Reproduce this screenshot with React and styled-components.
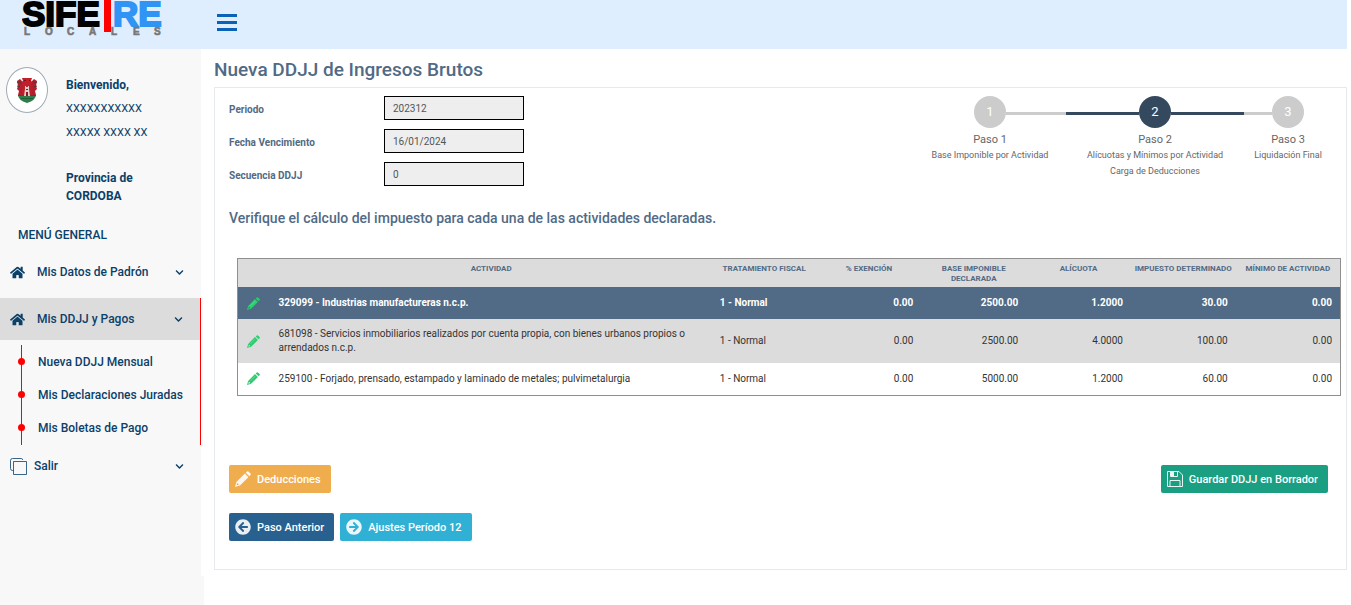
import React from "react";
import styled, { createGlobalStyle } from "styled-components";
import { FaHome, FaChevronDown, FaArrowCircleLeft, FaArrowCircleRight } from "react-icons/fa";

const Global = createGlobalStyle`
  *, *::before, *::after { box-sizing: border-box; }
  body { margin: 0; background: #fff; font-family: Roboto, "Liberation Sans", sans-serif; color: #516a85; font-size: 12px; }
  h1, h2, p, ul { margin: 0; padding: 0; }
  ul { list-style: none; }
  a { color: inherit; text-decoration: none; }
  button { font-family: inherit; cursor: pointer; }
`;

const Page = styled.div`
  padding-right: 4px;
  min-height: 100vh;
  display: flex;
  flex-direction: column;
`;
const Header = styled.header`
  height: 49px;
  background: #dfeeff;
  display: flex;
  align-items: flex-start;
`;
const LogoBox = styled.a`
  display: block;
  width: 217px;
  height: 49px;
  padding-left: 22px;
`;
const MenuButton = styled.button`
  border: 0;
  background: none;
  padding: 0;
  margin-top: 14px;
  width: 20px;
  height: 17px;
  display: flex;
  flex-direction: column;
  justify-content: space-between;
`;
const Bar = styled.span`
  display: block;
  width: 20px;
  height: 3px;
  background: #0b61b8;
`;
const Body = styled.div`
  flex: 1;
  display: flex;
`;
const Sidebar = styled.aside`
  width: 204px;
  flex: none;
  background: #f8f8f8;
  color: #0b4069;
  font-weight: 500;
`;
const SideInner = styled.div`
  min-height: 527px;
  border-right: 3px solid #fff;
`;
const Profile = styled.div`
  display: flex;
  gap: 18px;
  padding: 18px 0 0 6px;
`;
const Crest = styled.div`
  width: 42px;
  height: 46px;
  border: 1px solid #9fa9b5;
  border-radius: 50%;
  background: #fff;
  display: flex;
  align-items: center;
  justify-content: center;
`;
const Who = styled.div`
  padding-top: 6px;
  font-size: 12px;
  line-height: 24px;
`;
const Strong = styled.p`
  font-weight: 700;
`;
const Plain = styled.p`
  font-size: 11px;
  font-weight: 400;
`;
const Province = styled.p`
  margin-top: 24px;
  font-weight: 700;
  line-height: 18px;
  width: 90px;
`;
const MenuTitle = styled.h2`
  padding: 20px 0 6px 18px;
  font-size: 12px;
  line-height: 20px;
  font-weight: 500;
`;
const MenuItem = styled.a`
  display: flex;
  align-items: center;
  height: 42px;
  margin-bottom: ${(p) => p.$gap || 0}px;
  padding: 0 17px 0 10px;
  gap: ${(p) => (p.$wide ? 7 : 12)}px;
  background: ${(p) => (p.$active ? "#dcdcdc" : "none")};
  font-size: 12px;
  span { flex: 1; }
`;
const Group = styled.li`
  border-right: ${(p) => (p.$open ? "1px solid #f00" : "0")};
`;
const SubMenu = styled.ul`
  margin-left: 21px;
  border-left: 1px solid #f00;
  margin-top: 5px;
  padding-bottom: 1px;
`;
const SubItem = styled.li`
  display: flex;
  align-items: center;
  height: 33px;
  margin-left: -4px;
  gap: 13px;
  line-height: 18px;
  &::before {
    content: "";
    width: 7px;
    height: 7px;
    border-radius: 50%;
    background: #f00;
  }
`;
const Main = styled.main`
  flex: 1;
  min-width: 0;
  padding: 9px 0 34px 10px;
`;
const Title = styled.h1`
  font-size: 19px;
  line-height: 24px;
  font-weight: 500;
`;
const Panel = styled.section`
  margin-top: 5px;
  border: 1px solid #e6e9ed;
  padding: 8px 5px 28px 14px;
`;
const Top = styled.div`
  display: flex;
  justify-content: space-between;
  align-items: flex-start;
`;
const Fields = styled.div`
  display: grid;
  gap: 9px;
`;
const Field = styled.div`
  display: grid;
  grid-template-columns: 155px 140px;
  align-items: center;
`;
const Label = styled.label`
  padding-top: 3px;
  font-size: 10px;
  font-weight: 700;
`;
const Input = styled.input`
  height: 24px;
  width: 140px;
  border: 1px solid #000;
  background: #eee;
  padding: 0 8px;
  font: 400 10px Roboto, sans-serif;
  color: #555;
  border-radius: 0;
`;
const Steps = styled.ol`
  margin: 0 9px 0 0;
  padding: 0;
  list-style: none;
  display: flex;
`;
const Step = styled.li`
  width: ${(p) => p.$w}px;
  display: flex;
  flex-direction: column;
  align-items: center;
  text-align: center;
  color: #666;
`;
const Track = styled.div`
  align-self: stretch;
  display: flex;
  align-items: center;
  margin-bottom: 4px;
  &::before, &::after {
    content: "";
    flex: 1;
    height: 3px;
    margin-top: 3px;
    background: ${(p) => (p.$on ? "#34495e" : "#ccc")};
  }
  &::before { visibility: ${(p) => (p.$first ? "hidden" : "visible")}; }
  &::after { visibility: ${(p) => (p.$last ? "hidden" : "visible")}; }
`;
const Circle = styled.span`
  width: 32px;
  height: 32px;
  border-radius: 50%;
  background: ${(p) => (p.$on ? "#34495e" : "#ccc")};
  color: #fff;
  font-size: 13px;
  line-height: 32px;
`;
const StepName = styled.span`
  font-size: 11px;
  line-height: 15px;
`;
const StepText = styled.small`
  font-size: 9px;
  line-height: 16px;
`;
const Lead = styled.h2`
  margin-top: 22px;
  font-size: 14px;
  line-height: 20px;
  font-weight: 500;
`;
const Table = styled.table`
  width: calc(100% - 8px);
  margin: 30px 0 0 8px;
  border-collapse: collapse;
  table-layout: fixed;
  border: 1px solid #8f8f8f;
  color: #333;
  font-size: 10px;
`;
const Th = styled.th`
  height: 28px;
  padding: 5px 2px 3px;
  background: #dcdcdc;
  color: #516a85;
  font-size: 8px;
  line-height: 10px;
  font-weight: 700;
  vertical-align: top;
`;
const Tr = styled.tr`
  height: ${(p) => (p.$tall ? 44 : 32)}px;
  background: ${(p) => (p.$selected ? "#516a85" : p.$shade ? "#dcdcdc" : "#fff")};
  color: ${(p) => (p.$selected ? "#fff" : "#333")};
  font-weight: ${(p) => (p.$selected ? 700 : 400)};
`;
const Td = styled.td`
  padding: 0 8px 0 ${(p) => (p.$num ? 4 : 8)}px;
  line-height: 14px;
  text-align: ${(p) => (p.$num ? "right" : "left")};
`;
const EditButton = styled.button`
  border: 0;
  background: none;
  padding: 0 0 0 1px;
  color: #2ecc71;
  display: flex;
  svg { width: 13px; height: 13px; }
`;
const Actions = styled.div`
  display: flex;
  gap: 6px;
  margin-top: ${(p) => p.$top}px;
  justify-content: ${(p) => (p.$spread ? "space-between" : "flex-start")};
  padding-right: 13px;
`;
const Button = styled.button`
  display: flex;
  align-items: center;
  gap: 6px;
  height: 28px;
  border: 0;
  border-radius: 2px;
  padding: 1px 10px 0 6px;
  background: ${(p) => p.$bg};
  color: #fff;
  font-size: 11px;
  line-height: 15px;
  font-weight: 500;
  svg { width: 16px; height: 16px; opacity: 0.9; }
`;

const Logo = () => (
  <svg width="142" height="38" viewBox="0 0 142 38" role="img" aria-label="SIFERE Locales">
    <g fontFamily="Liberation Sans" fontWeight="700">
      <text x="0" y="26" fontSize="35" stroke="#000" strokeWidth="2">SIFE</text>
      <text x="91" y="26" fontSize="35" fill="#2f94f3" stroke="#2f94f3" strokeWidth="2">RE</text>
      <g fontSize="10" fill="#777" stroke="#777" strokeWidth=".6">
        {["L", "O", "C", "A", "L", "E", "S"].map((c, i) => (
          <text key={i} x={[2, 23, 45, 67, 89, 111, 132][i]} y="35">{c}</text>
        ))}
      </g>
    </g>
    <rect x="82" y="0" width="7" height="32" fill="#f00" />
  </svg>
);

const CrestArt = () => (
  <svg width="22" height="26" viewBox="0 0 22 26" aria-hidden="true">
    <path d="M6 1h10l-1 3 2 2v12H5V6l2-2z" fill="#c01f2b" />
    <path d="M1 4l3-2 3 3-1 2 1 2-1 9H2l1-4-2-2 1-3zM21 4l-3-2-3 3 1 2-1 2 1 9h4l-1-4 2-2-1-3z" fill="#b3202d" />
    <path d="M1 5l2 1M1 9l3 1M21 5l-2 1M21 9l-3 1M4 4v3M18 4v3" stroke="#5c3440" strokeWidth="1" />
    <path d="M2 18h18q0 5-9 8q-9-3-9-8z" fill="#2f7d4b" />
    <path d="M2 18h18v1H2z" fill="#6d3a32" />
    <path d="M5 21h12v1H5z" fill="#1f5e38" />
    <path d="M9 9h1v1h2V9h1v3l1 7H8l1-7z" fill="#e0cfcc" />
    <path d="M10 15h2v4h-2zM10 12h2v1h-2z" fill="#8a1a22" />
    <path d="M8 3h2v1H8zM13 3h1v1h-1z" fill="#6e1620" />
  </svg>
);

const Pencil = () => (
  <svg width="16" height="16" viewBox="0 0 16 16" fill="currentColor" aria-hidden="true">
    <path d="M10.700 1.700L12 .5q.7-.6 1.400 0l2.100 2.100q.6.700 0 1.400l-1.200 1.300z" />
    <path fillRule="evenodd" d="M9.800 2.600l3.600 3.600L5 14.600 0 16l1.400-5zM2.400 12l-.8 2.400 2.400-.8z" />
    <path d="M4.200 10.900l6-6" stroke="#fff" strokeWidth=".7" opacity=".4" />
  </svg>
);

const Copy = () => (
  <svg width="17" height="17" viewBox="0 0 17 17" fill="none" stroke="#0b4069" aria-hidden="true">
    <path d="M3.500 12.500H2.500Q.5 12.500.5 10.500V2.500Q.5.500 2.500.5H11.500Q12.500.5 12.500 2" strokeOpacity=".8" />
    <path d="M3.500 3.500h13v13h-13z" strokeOpacity=".8" />
  </svg>
);

const Floppy = () => (
  <svg viewBox="0 0 16 16" fill="none" stroke="#fff" aria-hidden="true">
    <path d="M.5.5h11.500l3.500 3.500v11.500H.5z" />
    <path d="M3.500.5h7v5h-7z" />
    <path d="M4 1h3v4H4z" fill="#fff" stroke="none" />
    <path d="M3 15.500v-6h10v6" />
  </svg>
);

const fields = [
  ["periodo", "Periodo", "202312"],
  ["vencimiento", "Fecha Vencimiento", "16/01/2024"],
  ["secuencia", "Secuencia DDJJ", "0"],
];
const rows = [
  ["329099 - Industrias manufactureras n.c.p.", "0.00", "2500.00", "1.2000", "30.00", "0.00"],
  ["681098 - Servicios inmobiliarios realizados por cuenta propia, con bienes urbanos propios o arrendados n.c.p.", "0.00", "2500.00", "4.0000", "100.00", "0.00"],
  ["259100 - Forjado, prensado, estampado y laminado de metales; pulvimetalurgia", "0.00", "5000.00", "1.2000", "60.00", "0.00"],
];
const heads = ["", "ACTIVIDAD", "TRATAMIENTO FISCAL", "% EXENCIÓN", "BASE IMPONIBLE DECLARADA", "ALÍCUOTA", "IMPUESTO DETERMINADO", "MÍNIMO DE ACTIVIDAD"];
const widths = ["3%", "40%", "9.5%", "9.5%", "9.5%", "9.5%", "9.5%", "9.5%"];

export default function App() {
  return (
    <Page>
      <Global />
      <Header>
        <LogoBox href="#"><Logo /></LogoBox>
        <MenuButton aria-label="Menú"><Bar /><Bar /><Bar /></MenuButton>
      </Header>
      <Body>
        <Sidebar>
          <SideInner>
            <Profile>
              <Crest><CrestArt /></Crest>
              <Who>
                <Strong>Bienvenido,</Strong>
                <Plain>XXXXXXXXXXX</Plain>
                <Plain>XXXXX XXXX XX</Plain>
                <Province>Provincia de CORDOBA</Province>
              </Who>
            </Profile>
            <MenuTitle>MENÚ GENERAL</MenuTitle>
            <ul>
              <Group>
                <MenuItem href="#" $gap={5}><FaHome size={15} /><span>Mis Datos de Padrón</span><FaChevronDown size={9} /></MenuItem>
              </Group>
              <Group $open>
                <MenuItem href="#" $active><FaHome size={15} /><span>Mis DDJJ y Pagos</span><FaChevronDown size={9} /></MenuItem>
                <SubMenu>
                  <SubItem><a href="#">Nueva DDJJ Mensual</a></SubItem>
                  <SubItem><a href="#">Mis Declaraciones Juradas</a></SubItem>
                  <SubItem><a href="#">Mis Boletas de Pago</a></SubItem>
                </SubMenu>
              </Group>
              <Group>
                <MenuItem href="#" $wide><Copy /><span>Salir</span><FaChevronDown size={9} /></MenuItem>
              </Group>
            </ul>
          </SideInner>
        </Sidebar>
        <Main>
          <Title>Nueva DDJJ de Ingresos Brutos</Title>
          <Panel>
            <Top>
              <Fields>
                {fields.map(([id, label, value]) => (
                  <Field key={id}>
                    <Label htmlFor={id}>{label}</Label>
                    <Input id={id} readOnly value={value} />
                  </Field>
                ))}
              </Fields>
              <Steps>
                <Step $w={152}><Track $first><Circle>1</Circle></Track><StepName>Paso 1</StepName><StepText>Base Imponible por Actividad</StepText></Step>
                <Step $w={178}><Track $on><Circle $on>2</Circle></Track><StepName>Paso 2</StepName><StepText>Alícuotas y Mínimos por Actividad<br />Carga de Deducciones</StepText></Step>
                <Step $w={88}><Track $last><Circle>3</Circle></Track><StepName>Paso 3</StepName><StepText>Liquidación Final</StepText></Step>
              </Steps>
            </Top>
            <Lead>Verifique el cálculo del impuesto para cada una de las actividades declaradas.</Lead>
            <Table>
              <colgroup>{widths.map((w, i) => <col key={i} width={w} />)}</colgroup>
              <thead><tr>{heads.map((h, i) => <Th key={i}>{h}</Th>)}</tr></thead>
              <tbody>
                {rows.map(([name, ...nums], i) => (
                  <Tr key={name} $selected={i === 0} $shade={i === 1} $tall={i === 1}>
                    <Td><EditButton aria-label="Editar"><Pencil /></EditButton></Td>
                    <Td>{name}</Td>
                    <Td>1 - Normal</Td>
                    {nums.map((n, j) => <Td key={j} $num>{n}</Td>)}
                  </Tr>
                ))}
              </tbody>
            </Table>
            <Actions $top={69} $spread>
              <Button $bg="#f0ad4e"><Pencil />Deducciones</Button>
              <Button $bg="#1a9f82"><Floppy />Guardar DDJJ en Borrador</Button>
            </Actions>
            <Actions $top={20}>
              <Button $bg="#286090"><FaArrowCircleLeft />Paso Anterior</Button>
              <Button $bg="#31b0d5"><FaArrowCircleRight />Ajustes Período 12</Button>
            </Actions>
          </Panel>
        </Main>
      </Body>
    </Page>
  );
}
